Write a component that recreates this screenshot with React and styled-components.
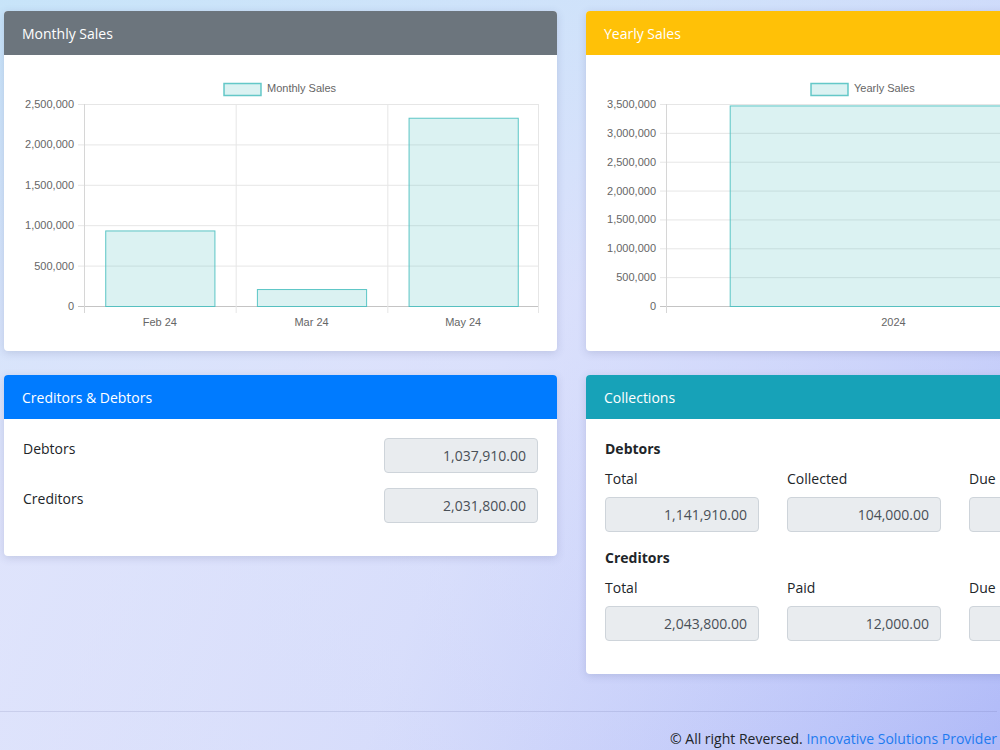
import React from "react"
import styled, { createGlobalStyle } from "styled-components"

const GlobalStyle = createGlobalStyle`
  html, body {
    margin: 0;
    padding: 0;
    overflow: hidden;
  }
  body {
    min-height: 750px;
    font-family: "Open Sans", "Noto Sans", sans-serif;
    color: #212529;
    background:
      linear-gradient(160deg, rgba(198, 228, 249, 0.95) 0%, rgba(222, 228, 252, 0.6) 45%, rgba(190, 198, 250, 0) 100%),
      linear-gradient(110deg, #e4e7fc 0%, #d5dbfb 50%, #b0baf8 100%);
  }
`

const Page = styled.div`
  width: 1200px;
  padding: 11px 0 0 4px;
`

const Grid = styled.div`
  display: grid;
  grid-template-columns: 553px 553px;
  column-gap: 29px;
  row-gap: 24px;
  align-items: start;
`

const Card = styled.section`
  background: #fff;
  border-radius: 4px;
  overflow: hidden;
  box-shadow: 0 2px 8px rgba(60, 70, 120, 0.18);
`

const CardHeader = styled.header`
  height: 44px;
  display: flex;
  align-items: center;
  padding: 0 18px;
  background: ${(p) => p.$bg};
  color: #fff;
  font-size: 14px;
`

const CardBody = styled.div`
  padding: ${(p) => (p.$chart ? "0" : "19px 19px 33px")};
`

const ChartSvg = styled.svg`
  display: block;
  font-family: "Liberation Sans", Arial, sans-serif;
  font-size: 11px;
`

const FieldRow = styled.div`
  display: flex;
  justify-content: space-between;
  align-items: flex-start;
  & + & {
    margin-top: 15px;
  }
`

const Label = styled.div`
  font-size: 14px;
  line-height: 22px;
`

const Amount = styled.input`
  box-sizing: border-box;
  width: 154px;
  height: 35px;
  padding: 0 11px;
  border: 1px solid #ced4da;
  border-radius: 4px;
  background: #e9ecef;
  color: #495057;
  font-family: inherit;
  font-size: 14px;
  text-align: right;
  outline: none;
`

const SectionTitle = styled.h6`
  margin: 0 0 8px;
  font-size: 14px;
  line-height: 22px;
  font-weight: 700;
`

const Cols = styled.div`
  display: grid;
  grid-template-columns: repeat(3, 154px);
  column-gap: 28px;
  margin-bottom: ${(p) => (p.$last ? "0" : "15px")};
`

const Col = styled.div`
  display: flex;
  flex-direction: column;
  gap: 7px;
`

const Footer = styled.footer`
  margin: 37px 0 0 -4px;
  border-top: 1px solid rgba(80, 90, 150, 0.15);
  width: 997px;
  padding-top: 16px;
  text-align: right;
  font-size: 14px;
  line-height: 22px;
  color: #212529;
`

const FooterLink = styled.a`
  color: #1e7bf0;
  text-decoration: none;
`

const PLOT = { left: 80, right: 535, top: 49, bottom: 251 }

const fmt = (n) => n.toLocaleString("en-US")

const BarChart = ({ legend, labels, values, max, step, boxX }) => {
  const { left, right, top, bottom } = PLOT
  const ticks = []
  for (let v = 0; v <= max; v += step) ticks.push(v)
  const y = (v) => bottom - (v / max) * (bottom - top)
  const cat = (right - left) / labels.length
  const barW = cat * 0.72

  return (
    <ChartSvg width="553" height="296" viewBox="0 0 553 296">
      <rect x={boxX} y="28.5" width="37" height="12" fill="rgba(75,192,192,0.2)" stroke="rgba(75,192,192,0.85)" strokeWidth="1.5" />
      <text x={boxX + 43} y="37" fill="#666">{legend}</text>

      {ticks.map((v) => (
        <g key={v}>
          <line x1="74" x2={right} y1={y(v) + 0.5} y2={y(v) + 0.5} stroke={v === 0 ? "#c4c4c4" : "#e6e6e6"} />
          <text x="70" y={y(v) + 4} textAnchor="end" fill="#666">{fmt(v)}</text>
        </g>
      ))}

      {labels.map((_, i) => (
        <line key={i} x1={left + i * cat + 0.5} x2={left + i * cat + 0.5} y1={top} y2={bottom + 7} stroke={i === 0 ? "#d6d6d6" : "#e6e6e6"} />
      ))}
      {labels.length > 1 && (
        <line x1={right - 0.5} x2={right - 0.5} y1={top} y2={bottom + 7} stroke="#e6e6e6" />
      )}

      {values.map((v, i) => {
        const x = left + i * cat + (cat - barW) / 2
        return (
          <rect key={i} x={x + 0.5} y={y(v) + 0.5} width={barW} height={bottom - y(v)} fill="rgba(75,192,192,0.2)" stroke="rgba(75,192,192,0.9)" strokeWidth="1" />
        )
      })}

      {labels.map((l, i) => (
        <text key={l} x={left + i * cat + cat / 2} y="271" textAnchor="middle" fill="#666">{l}</text>
      ))}
    </ChartSvg>
  )
}

const Field = ({ label, value }) => (
  <FieldRow>
    <Label>{label}</Label>
    <Amount readOnly value={value} />
  </FieldRow>
)

const Group = ({ title, items, last }) => (
  <>
    <SectionTitle>{title}</SectionTitle>
    <Cols $last={last}>
      {items.map(([label, value]) => (
        <Col key={label}>
          <Label>{label}</Label>
          <Amount readOnly value={value} />
        </Col>
      ))}
    </Cols>
  </>
)

export default function App() {
  return (
    <>
      <GlobalStyle />
      <Page>
        <Grid>
          <Card>
            <CardHeader $bg="#6c757d">Monthly Sales</CardHeader>
            <CardBody $chart>
              <BarChart
                legend="Monthly Sales"
                labels={["Feb 24", "Mar 24", "May 24"]}
                values={[935000, 210000, 2330000]}
                max={2500000}
                step={500000}
                boxX={220}
              />
            </CardBody>
          </Card>

          <Card>
            <CardHeader $bg="#ffc107">Yearly Sales</CardHeader>
            <CardBody $chart>
              <BarChart
                legend="Yearly Sales"
                labels={["2024"]}
                values={[3475000]}
                max={3500000}
                step={500000}
                boxX={225}
              />
            </CardBody>
          </Card>

          <Card>
            <CardHeader $bg="#007bff">Creditors &amp; Debtors</CardHeader>
            <CardBody>
              <Field label="Debtors" value="1,037,910.00" />
              <Field label="Creditors" value="2,031,800.00" />
            </CardBody>
          </Card>

          <Card>
            <CardHeader $bg="#17a2b8">Collections</CardHeader>
            <CardBody>
              <Group
                title="Debtors"
                items={[["Total", "1,141,910.00"], ["Collected", "104,000.00"], ["Due", "1,037,910.00"]]}
              />
              <Group
                title="Creditors"
                items={[["Total", "2,043,800.00"], ["Paid", "12,000.00"], ["Due", "2,031,800.00"]]}
                last
              />
            </CardBody>
          </Card>
        </Grid>

        <Footer>
          © All right Reversed. <FooterLink href="#">Innovative Solutions Provider</FooterLink>
        </Footer>
      </Page>
    </>
  )
}
